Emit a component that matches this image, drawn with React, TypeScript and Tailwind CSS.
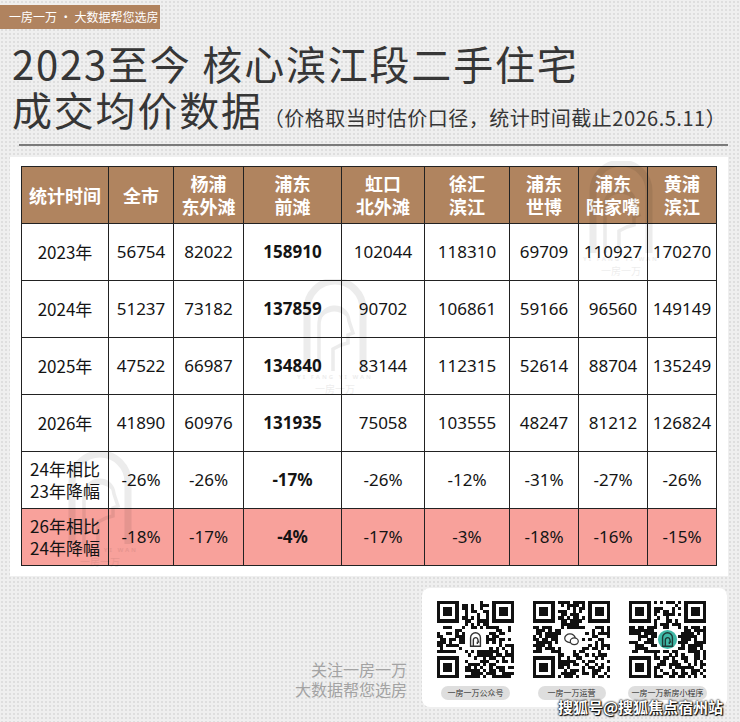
import React from 'react';

const FONT = { fontFamily: '"Noto Sans", "Noto Sans CJK SC", sans-serif' };
const CJK = { fontFamily: '"Noto Sans CJK SC", "Noto Sans", sans-serif' };

const COLS = [87, 65, 70, 98, 83, 85, 69, 69, 69];

const HEAD = [
  ['统计时间'],
  ['全市'],
  ['杨浦', '东外滩'],
  ['浦东', '前滩'],
  ['虹口', '北外滩'],
  ['徐汇', '滨江'],
  ['浦东', '世博'],
  ['浦东', '陆家嘴'],
  ['黄浦', '滨江'],
];

const ROWS = [
  { label: ['2023年'], vals: ['56754', '82022', '158910', '102044', '118310', '69709', '110927', '170270'] },
  { label: ['2024年'], vals: ['51237', '73182', '137859', '90702', '106861', '59166', '96560', '149149'] },
  { label: ['2025年'], vals: ['47522', '66987', '134840', '83144', '112315', '52614', '88704', '135249'] },
  { label: ['2026年'], vals: ['41890', '60976', '131935', '75058', '103555', '48247', '81212', '126824'] },
  { label: ['24年相比', '23年降幅'], vals: ['-26%', '-26%', '-17%', '-26%', '-12%', '-31%', '-27%', '-26%'] },
  { label: ['26年相比', '24年降幅'], vals: ['-18%', '-17%', '-4%', '-17%', '-3%', '-18%', '-16%', '-15%'], pink: true },
];

function rng(seed: number) {
  let a = seed;
  return () => {
    a |= 0;
    a = (a + 0x6d2b79f5) | 0;
    let t = Math.imul(a ^ (a >>> 15), 1 | a);
    t = (t + Math.imul(t ^ (t >>> 7), 61 | t)) ^ t;
    return ((t ^ (t >>> 14)) >>> 0) / 4294967296;
  };
}

function Finder({ x, y }: { x: number; y: number }) {
  return (
    <g>
      <rect x={x} y={y} width={7} height={7} fill="#111" />
      <rect x={x + 1} y={y + 1} width={5} height={5} fill="#fff" />
      <rect x={x + 2} y={y + 2} width={3} height={3} fill="#111" />
    </g>
  );
}

function ArchIcon({ color = '#333' }: { color?: string }) {
  return (
    <g fill="none" stroke={color} strokeWidth={0.45}>
      <path d="M-1.6 2.2 V-0.6 A1.6 1.6 0 0 1 1.6 -0.6 V2.2 Z" />
      <path d="M-0.7 2.2 V0.2 C-0.7 -0.9 0.9 -0.9 0.8 0.3 L1 0.8 L0.6 0.9 V1.5" />
    </g>
  );
}

function QR({ seed, center, dense }: { seed: number; center: 'arch' | 'chat' | 'teal'; dense?: boolean }) {
  const n = 25;
  const r = rng(seed);
  const cells: React.ReactNode[] = [];
  for (let y = 0; y < n; y++) {
    for (let x = 0; x < n; x++) {
      const inFinder = (x < 8 && y < 8) || (x > n - 9 && y < 8) || (x < 8 && y > n - 9);
      const inCenter = x >= 9 && x <= 15 && y >= 9 && y <= 15;
      if (inFinder || inCenter) continue;
      if (r() < (dense ? 0.55 : 0.5)) {
        cells.push(<rect key={`${x}-${y}`} x={x} y={y} width={1.02} height={1.02} fill="#111" />);
      }
    }
  }
  return (
    <svg width={77} height={77} viewBox="0 0 25 25" shapeRendering="crispEdges">
      <rect width={25} height={25} fill="#fff" />
      {cells}
      <Finder x={0} y={0} />
      <Finder x={18} y={0} />
      <Finder x={0} y={18} />
      <g transform="translate(12.5 12.5)" shapeRendering="auto">
        {center === 'arch' && (
          <>
            <rect x={-2.6} y={-2.6} width={5.2} height={5.2} rx={0.8} fill="#fff" />
            <ArchIcon />
          </>
        )}
        {center === 'chat' && (
          <>
            <rect x={-2.8} y={-2.8} width={5.6} height={5.6} fill="#fff" />
            <g fill="none" stroke="#333" strokeWidth={0.4}>
              <ellipse cx={-0.5} cy={-0.4} rx={1.7} ry={1.4} />
              <ellipse cx={0.9} cy={0.6} rx={1.3} ry={1.1} fill="#fff" />
            </g>
          </>
        )}
        {center === 'teal' && (
          <>
            <circle r={3.1} fill="#3fb8a6" />
            <ArchIcon color="#1d3b37" />
          </>
        )}
      </g>
    </svg>
  );
}

function Watermark({ className }: { className: string }) {
  return (
    <div className={`absolute flex flex-col items-center opacity-[0.07] pointer-events-none ${className}`}>
      <svg width={64} height={92} viewBox="0 0 64 92">
        <path d="M4 92 V30 A28 28 0 0 1 60 30 V92" fill="none" stroke="#000" strokeWidth={7} />
        <path
          d="M16 92 V46 C16 24 44 22 46 42 L50 54 L45 56 V64 L38 66 L30 70 V92"
          fill="none"
          stroke="#000"
          strokeWidth={3.5}
        />
        <path d="M16 40 C22 30 34 28 44 36" fill="none" stroke="#000" strokeWidth={3} />
      </svg>
      <div className="text-[6px] tracking-[2px] font-bold text-black mt-[2px]" style={FONT}>YI FANG YI WAN</div>
      <div className="text-[10px] text-black leading-[14px]" style={CJK}>一房一万</div>
    </div>
  );
}

export default function App() {
  return (
    <div
      className="relative w-[740px] h-[722px] overflow-hidden bg-[#efefef] bg-[radial-gradient(#dedede_0.8px,transparent_0.8px)] bg-[length:4px_4px] text-[#333]"
      style={CJK}
    >
      <div className="pt-[5px]">
        <div className="w-[160px] h-[24px] bg-[#b0835f] text-white text-[12px] leading-[24px] whitespace-nowrap pl-[9px]">
          一房一万 • 大数据帮您选房
        </div>
      </div>

      <div className="pl-[12px] mt-[11px] text-[#363636] tracking-[1.8px]">
        <div className="text-[40px] leading-[46px] font-normal">2023至今 核心滨江段二手住宅</div>
        <div className="text-[40px] leading-[46px] font-normal whitespace-nowrap">
          成交均价数据
          <span className="text-[20px] leading-[20px] ml-[1px] tracking-[0.5px]">（价格取当时估价口径，统计时间截止2026.5.11）</span>
        </div>
      </div>

      <div className="ml-[19px] mr-[12px] mt-[12px] h-[2px] bg-[#7a7a7a]" />

      <div className="relative ml-[10px] mr-[12px] mt-[11px] bg-white pl-[11px] pt-[9px] pb-[10px]">
        <table className="table-fixed border-collapse w-[695px]" style={FONT}>
          <colgroup>
            {COLS.map((w, i) => (
              <col key={i} style={{ width: w }} />
            ))}
          </colgroup>
          <thead>
            <tr className="h-[57px] bg-[#b0845f]">
              {HEAD.map((h, i) => (
                <th
                  key={i}
                  className="border-[1.5px] border-[#222] text-white text-[18px] leading-[23px] font-bold p-0 text-center"
                  style={CJK}
                >
                  {h.map((l, j) => (
                    <div key={j}>{l}</div>
                  ))}
                </th>
              ))}
            </tr>
          </thead>
          <tbody>
            {ROWS.map((row, ri) => (
              <tr key={ri} className={`h-[57px] ${row.pink ? 'bg-[#f8a19b]' : 'bg-white'}`}>
                <td className="border-[1.5px] border-[#222] text-center text-[17px] leading-[22px] text-[#141414] p-0" style={CJK}>
                  {row.label.map((l, j) => (
                    <div key={j}>{l}</div>
                  ))}
                </td>
                {row.vals.map((v, vi) => (
                  <td
                    key={vi}
                    className={`border-[1.5px] border-[#222] text-center text-[17px] text-[#141414] p-0 ${vi === 2 ? 'font-bold' : ''}`}
                  >
                    {v}
                  </td>
                ))}
              </tr>
            ))}
          </tbody>
        </table>

        <Watermark className="left-[573px] top-[4px]" />
        <Watermark className="left-[287px] top-[122px]" />
        <Watermark className="left-[52px] top-[295px]" />
      </div>

      <div className="flex justify-end items-end mt-[12px] pr-[13px]">
        <div className="text-right text-[16px] leading-[20px] text-[#a3a3a3] mb-[8px] mr-[15px]">
          <div>关注一房一万</div>
          <div>大数据帮您选房</div>
        </div>
        <div className="w-[305px] h-[119px] bg-white rounded-[8px] pt-[13px] pl-[15px] flex gap-[19px]">
          {[
            { seed: 11, center: 'arch' as const, label: '一房一万公众号', pw: 'w-[69px]' },
            { seed: 27, center: 'chat' as const, label: '一房一万运营', pw: 'w-[68px]' },
            { seed: 53, center: 'teal' as const, label: '一房一万新房小程序', pw: 'w-[79px]' },
          ].map((q, i) => (
            <div key={i} className="flex flex-col items-center w-[77px]">
              <QR seed={q.seed} center={q.center} dense={i === 2} />
              <div
                className={`${q.pw} h-[14px] mt-[8px] rounded-full bg-[#dedede] text-[8px] leading-[14px] text-center text-[#333] whitespace-nowrap`}
              >
                {q.label}
              </div>
            </div>
          ))}
        </div>
      </div>

      <div
        className="absolute right-[17px] bottom-[5px] text-white text-[15px] font-bold leading-[20px] [text-shadow:0_0_2px_#000,0_0_2px_#000,1px_1px_1px_#000]"
      >
        搜狐号@搜狐焦点宿州站
      </div>
    </div>
  );
}
